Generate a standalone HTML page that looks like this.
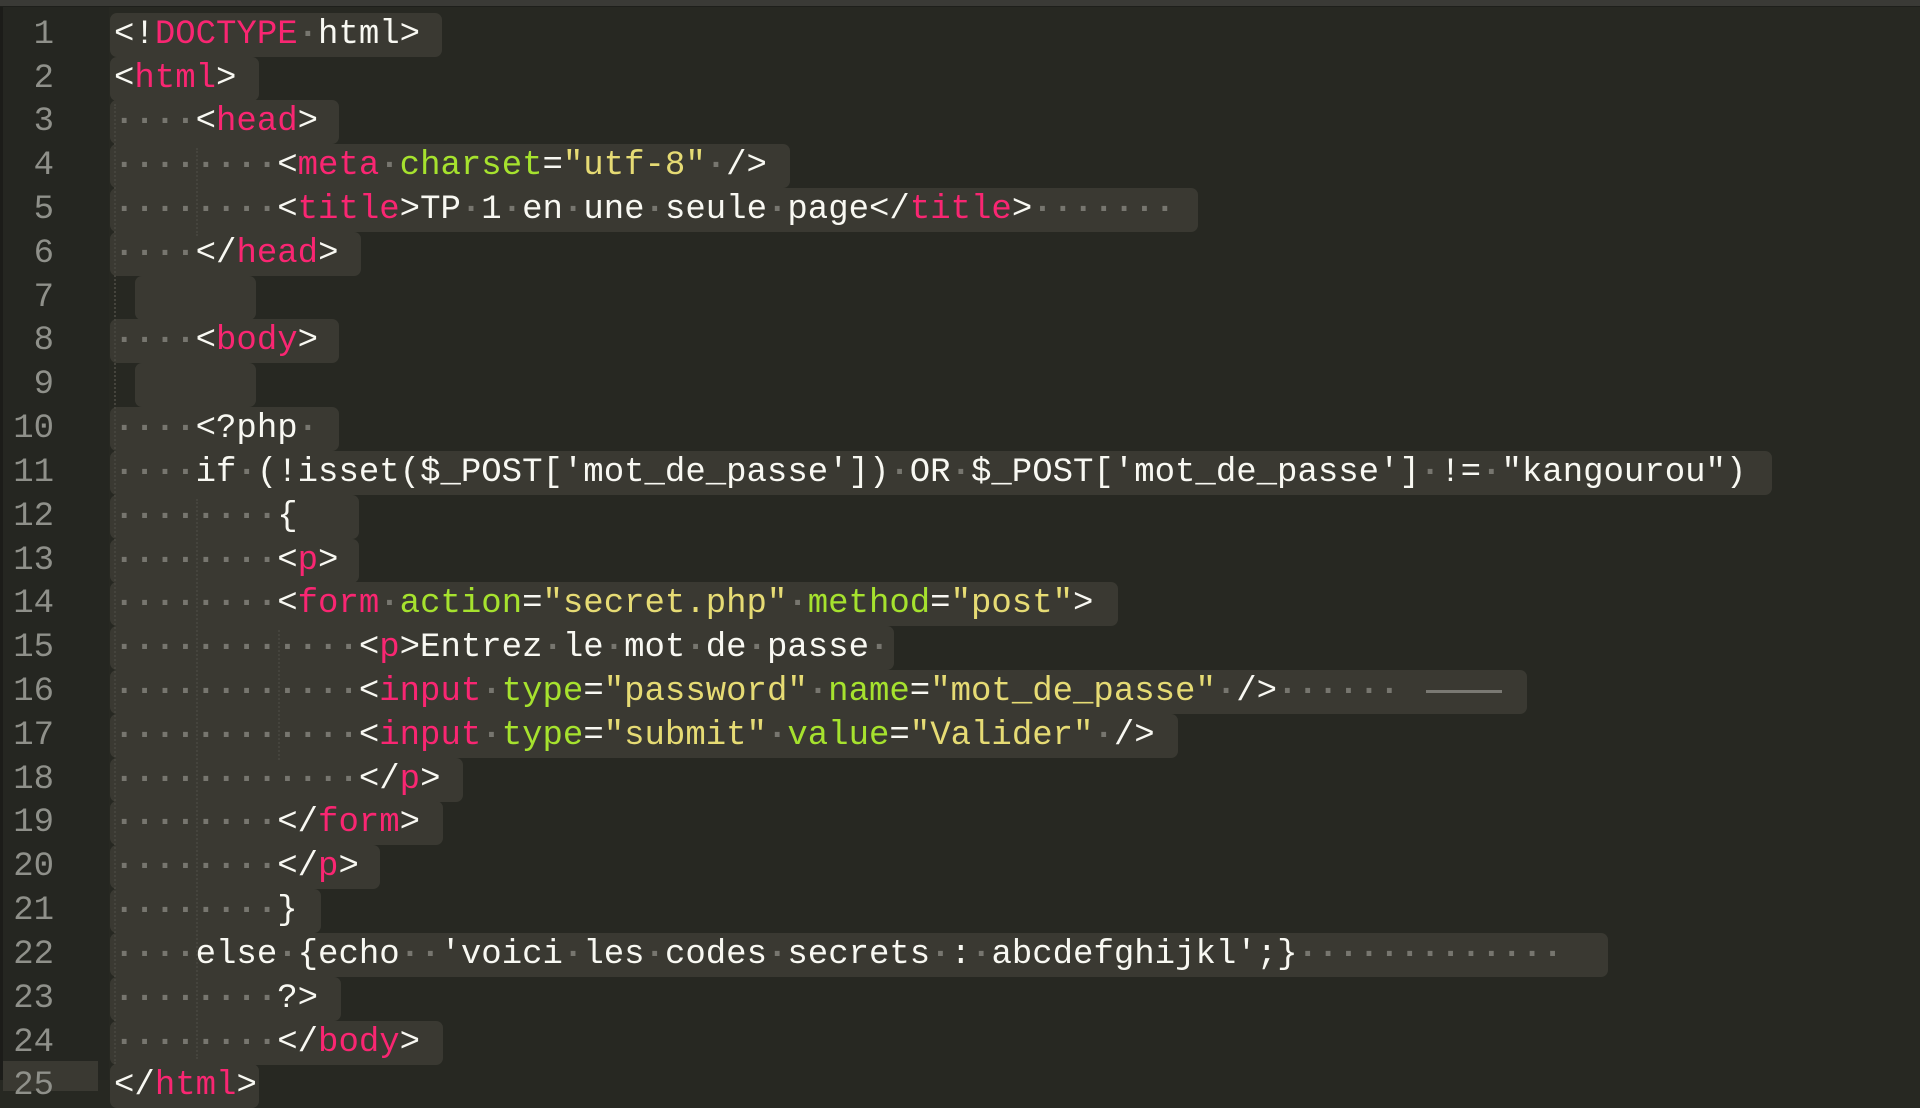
<!DOCTYPE html>
<html><head><meta charset="utf-8"><style>
body{margin:0;width:1920px;height:1080px;background:#272822;overflow:hidden;position:relative;font-family:"Liberation Mono",monospace;}
.top{position:absolute;left:0;top:0;width:1920px;height:6px;background:#3a3a36;border-bottom:1px solid #1e1f1b;z-index:2}
.gut{position:absolute;left:0;top:7px;width:106px;height:1073px;background:#252621;border-left:3px solid #1c1c19}
.w{position:absolute;left:0;top:4px;width:1920px;height:1080px}
.b{position:absolute;left:110px;height:44px;background:#3a3932;border-radius:7px}
.ln{position:absolute;left:0;width:54px;text-align:right;font-size:34px;line-height:44px;color:#8f908a}
.t{position:absolute;left:114px;font-size:34px;line-height:44px;color:#f8f8f2;white-space:pre}
.p{color:#f92672}.g{color:#a6e22e}.y{color:#e6db74}.d{color:#77766f;font-weight:bold}
.guide{position:absolute;top:375px;height:690px;border-left:2px dotted #45443d}
</style></head><body>
<div class="top"></div>
<div class="gut"></div>
<div class="w">
<div style="position:absolute;left:3px;top:1057px;width:95px;height:30px;background:#3a3932"></div>

<div class="b" style="top:9px;width:332px"></div>
<div class="b" style="top:53px;width:149px"></div>
<div class="b" style="top:96px;width:229px"></div>
<div class="b" style="top:140px;width:680px"></div>
<div class="b" style="top:184px;width:1088px"></div>
<div class="b" style="top:228px;width:251px"></div>
<div class="b" style="top:272px;left:135px;width:121px"></div>
<div class="b" style="top:315px;width:229px"></div>
<div class="b" style="top:359px;left:135px;width:121px"></div>
<div class="b" style="top:403px;width:229px"></div>
<div class="b" style="top:447px;width:1662px"></div>
<div class="b" style="top:491px;width:249px"></div>
<div class="b" style="top:535px;width:249px"></div>
<div class="b" style="top:578px;width:1008px"></div>
<div class="b" style="top:622px;width:784px"></div>
<div class="b" style="top:666px;width:1417px"></div>
<div class="b" style="top:710px;width:1068px"></div>
<div class="b" style="top:754px;width:353px"></div>
<div class="b" style="top:797px;width:333px"></div>
<div class="b" style="top:841px;width:270px"></div>
<div class="b" style="top:885px;width:211px"></div>
<div class="b" style="top:929px;width:1498px"></div>
<div class="b" style="top:973px;width:231px"></div>
<div class="b" style="top:1017px;width:333px"></div>
<div class="b" style="top:1060px;width:149px"></div>

<div class="guide" style="left:114px;top:100px;height:960px"></div>
<div class="guide" style="left:196px;top:144px;height:88px"></div>
<div class="guide" style="left:196px;top:495px;height:560px"></div>
<div class="guide" style="left:278px;top:626px;height:130px"></div>

<div class="ln" style="top:9px">1</div><div class="t" style="top:9px">&lt;!<span class="p">DOCTYPE</span><span class="d">·</span>html&gt;</div>
<div class="ln" style="top:53px">2</div><div class="t" style="top:53px">&lt;<span class="p">html</span>&gt;</div>
<div class="ln" style="top:96px">3</div><div class="t" style="top:96px"><span class="d">····</span>&lt;<span class="p">head</span>&gt;</div>
<div class="ln" style="top:140px">4</div><div class="t" style="top:140px"><span class="d">········</span>&lt;<span class="p">meta</span><span class="d">·</span><span class="g">charset</span>=<span class="y">"utf-8"</span><span class="d">·</span>/&gt;</div>
<div class="ln" style="top:184px">5</div><div class="t" style="top:184px"><span class="d">········</span>&lt;<span class="p">title</span>&gt;TP<span class="d">·</span>1<span class="d">·</span>en<span class="d">·</span>une<span class="d">·</span>seule<span class="d">·</span>page&lt;/<span class="p">title</span>&gt;<span class="d">·······</span></div>
<div class="ln" style="top:228px">6</div><div class="t" style="top:228px"><span class="d">····</span>&lt;/<span class="p">head</span>&gt;</div>
<div class="ln" style="top:272px">7</div>
<div class="ln" style="top:315px">8</div><div class="t" style="top:315px"><span class="d">····</span>&lt;<span class="p">body</span>&gt;</div>
<div class="ln" style="top:359px">9</div>
<div class="ln" style="top:403px">10</div><div class="t" style="top:403px"><span class="d">····</span>&lt;?php<span class="d">·</span></div>
<div class="ln" style="top:447px">11</div><div class="t" style="top:447px"><span class="d">····</span>if<span class="d">·</span>(!isset($_POST['mot_de_passe'])<span class="d">·</span>OR<span class="d">·</span>$_POST['mot_de_passe']<span class="d">·</span>!=<span class="d">·</span>"kangourou")</div>
<div class="ln" style="top:491px">12</div><div class="t" style="top:491px"><span class="d">········</span>{</div>
<div class="ln" style="top:535px">13</div><div class="t" style="top:535px"><span class="d">········</span>&lt;<span class="p">p</span>&gt;</div>
<div class="ln" style="top:578px">14</div><div class="t" style="top:578px"><span class="d">········</span>&lt;<span class="p">form</span><span class="d">·</span><span class="g">action</span>=<span class="y">"secret.php"</span><span class="d">·</span><span class="g">method</span>=<span class="y">"post"</span>&gt;</div>
<div class="ln" style="top:622px">15</div><div class="t" style="top:622px"><span class="d">············</span>&lt;<span class="p">p</span>&gt;Entrez<span class="d">·</span>le<span class="d">·</span>mot<span class="d">·</span>de<span class="d">·</span>passe<span class="d">·</span></div>
<div class="ln" style="top:666px">16</div><div class="t" style="top:666px"><span class="d">············</span>&lt;<span class="p">input</span><span class="d">·</span><span class="g">type</span>=<span class="y">"password"</span><span class="d">·</span><span class="g">name</span>=<span class="y">"mot_de_passe"</span><span class="d">·</span>/&gt;<span class="d">······</span></div>
<div style="position:absolute;left:1426px;top:686px;width:76px;height:3px;background:#7a7973"></div>
<div class="ln" style="top:710px">17</div><div class="t" style="top:710px"><span class="d">············</span>&lt;<span class="p">input</span><span class="d">·</span><span class="g">type</span>=<span class="y">"submit"</span><span class="d">·</span><span class="g">value</span>=<span class="y">"Valider"</span><span class="d">·</span>/&gt;</div>
<div class="ln" style="top:754px">18</div><div class="t" style="top:754px"><span class="d">············</span>&lt;/<span class="p">p</span>&gt;</div>
<div class="ln" style="top:797px">19</div><div class="t" style="top:797px"><span class="d">········</span>&lt;/<span class="p">form</span>&gt;</div>
<div class="ln" style="top:841px">20</div><div class="t" style="top:841px"><span class="d">········</span>&lt;/<span class="p">p</span>&gt;</div>
<div class="ln" style="top:885px">21</div><div class="t" style="top:885px"><span class="d">········</span>}</div>
<div class="ln" style="top:929px">22</div><div class="t" style="top:929px"><span class="d">····</span>else<span class="d">·</span>{echo<span class="d">··</span>'voici<span class="d">·</span>les<span class="d">·</span>codes<span class="d">·</span>secrets<span class="d">·</span>:<span class="d">·</span>abcdefghijkl';}<span class="d">·············</span></div>
<div class="ln" style="top:973px">23</div><div class="t" style="top:973px"><span class="d">········</span>?&gt;</div>
<div class="ln" style="top:1017px">24</div><div class="t" style="top:1017px"><span class="d">········</span>&lt;/<span class="p">body</span>&gt;</div>
<div class="ln" style="top:1060px">25</div><div class="t" style="top:1060px">&lt;/<span class="p">html</span>&gt;</div>
</div>
</body></html>
